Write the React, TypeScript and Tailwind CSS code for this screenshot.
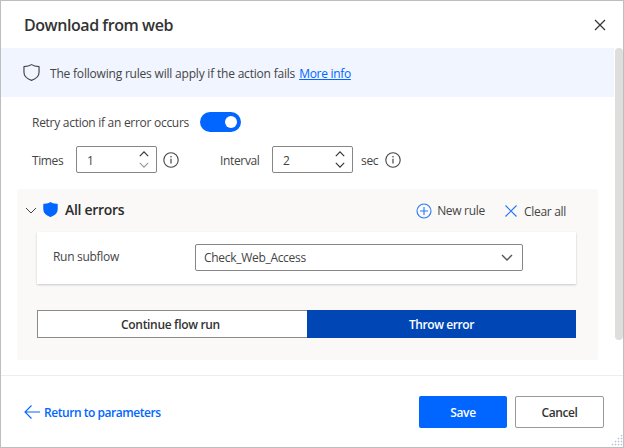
import type { ReactNode } from "react";

const Chevron = ({ up = false, thin = false, className = "" }: { up?: boolean; thin?: boolean; className?: string }) => (
  <svg viewBox="0 0 12 7" fill="none" stroke="currentColor" className={className}>
    <path d={up ? "M1 6 6 1l5 5" : "m1 1 5 5 5-5"} strokeWidth={thin ? "1" : "1.4"} />
  </svg>
);

const Info = () => (
  <svg viewBox="0 0 16 16" fill="none" stroke="#444" className="h-4 w-4 shrink-0">
    <circle cx="8" cy="8" r="7.2" strokeWidth="1.1" />
    <path d="M8 6.7v4.8" strokeWidth="1.2" />
    <circle cx="8" cy="4.7" r=".8" fill="#444" stroke="none" />
  </svg>
);

const Shield = ({ solid = false, className = "" }: { solid?: boolean; className?: string }) => (
  <svg
    viewBox="0 0 16 16"
    fill={solid ? "#0066ff" : "none"}
    stroke={solid ? "#0066ff" : "#444"}
    strokeWidth="1.1"
    strokeLinejoin="round"
    className={className}
  >
    <path d="M8 .6C6.200 1.800 3.500 2.400.9 2.500v5.300C.9 11.300 3.500 13.900 8 15.400c4.500-1.500 7.100-4.100 7.100-7.600V2.500C12.500 2.400 9.800 1.800 8 .6Z" />
  </svg>
);

const Stepper = ({ value, atMin = false }: { value: string; atMin?: boolean }) => (
  <div className="flex h-[27px] w-[81px] shrink-0 items-center justify-between rounded-[2px] border border-[#868686] bg-white pr-[7px] pl-[10px]">
    <span className="pt-0.5">{value}</span>
    <div className="flex flex-col gap-[5px]">
      <Chevron up className="h-[6px] w-[10px] text-[#333]" />
      <Chevron className={atMin ? "h-[6px] w-[10px] text-[#999]" : "h-[6px] w-[10px] text-[#333]"} />
    </div>
  </div>
);

const Label = ({ className = "", children }: { className?: string; children: ReactNode }) => (
  <span className={`whitespace-nowrap ${className}`}>{children}</span>
);

export default function App() {
  return (
    <div className="flex h-[448px] w-[624px] flex-col overflow-hidden border border-[#bebebe] bg-white font-['Open_Sans','Noto_Sans',sans-serif] text-[12px] leading-4 text-[#444]">
      <header className="flex h-[47px] shrink-0 items-center justify-between pr-[17px] pl-[23px]">
        <h1 className="text-[16px] leading-6 font-semibold tracking-[-0.44px] text-[#333]">Download from web</h1>
        <svg viewBox="0 0 12 12" stroke="#333" strokeWidth="1.2" className="h-3 w-3">
          <path d="m1 1 10 10M11 1 1 11" />
        </svg>
      </header>

      <div className="flex h-[327px] shrink-0">
        <main className="w-[613px]">
          <div className="flex h-[49px] items-center bg-[#f0f5ff] pl-[22px]">
            <Shield className="mr-[10px] h-[17px] w-[17px]" />
            <Label className="pt-0.5 tracking-[-0.2px]">The following rules will apply if the action fails</Label>
            <a className="ml-1 pt-0.5 tracking-[-0.3px] whitespace-nowrap text-[#0066ff] underline">More info</a>
          </div>

          <div className="flex h-[49px] items-center pl-[31px]">
            <Label className="w-[168px] pt-0.5 tracking-[-0.28px]">Retry action if an error occurs</Label>
            <div className="flex h-5 w-[41px] items-center justify-end rounded-full bg-[#0066ff] pr-1">
              <div className="h-3 w-3 rounded-full bg-white" />
            </div>
          </div>

          <div className="flex h-[27px] items-center pl-[31px]">
            <Label className="w-[44px] pt-0.5 tracking-[-0.4px]">Times</Label>
            <Stepper value="1" atMin />
            <div className="ml-[6px] flex w-[57px]">
              <Info />
            </div>
            <Label className="w-[52px] pt-0.5 tracking-[-0.35px]">Interval</Label>
            <Stepper value="2" />
            <Label className="ml-2 w-[24px] pt-0.5 tracking-[-0.3px]">sec</Label>
            <Info />
          </div>

          <section className="mt-4 ml-4 h-[171px] w-[581px] rounded-[3px] bg-[#faf9f8] pr-[22px] pl-5">
            <div className="flex h-[43px] items-center">
              <div className="-ml-[12px] flex flex-1 items-center">
                <Chevron thin className="h-[7px] w-[12px] text-[#444]" />
                <Shield solid className="mb-0.5 ml-[6px] h-[15px] w-[15px]" />
                <h2 className="ml-[7px] pb-px text-[14px] leading-5 font-semibold tracking-[-0.3px] text-[#2b2b2b]">All errors</h2>
              </div>
              <button className="flex items-center pr-5">
                <svg viewBox="0 0 16 16" fill="none" stroke="#2878f5" strokeWidth="1.1" className="mr-[5px] h-4 w-4">
                  <circle cx="8" cy="8" r="7" />
                  <path d="M8 4v8M4 8h8" />
                </svg>
                <Label className="pt-px tracking-[-0.3px]">New rule</Label>
              </button>
              <button className="mr-[10px] flex items-center">
                <svg viewBox="0 0 12 12" stroke="#2878f5" strokeWidth="1.2" className="mr-[7px] h-3 w-3">
                  <path d="m.5.5 11 11m0-11-11 11" />
                </svg>
                <Label className="pt-0.5 tracking-[-0.3px]">Clear all</Label>
              </button>
            </div>

            <div className="flex h-[52px] items-center bg-white pb-0.5 pl-4 shadow-[0_1px_2px_rgba(0,0,0,0.2)]">
              <Label className="w-[142px] shrink-0 tracking-[-0.3px]">Run subflow</Label>
              <div className="flex h-[27px] w-[328px] items-center justify-between rounded-[2px] border border-[#868686] pr-[9px] pl-2">
                <Label className="pt-px tracking-[-0.3px]">Check_Web_Access</Label>
                <Chevron className="h-[7px] w-[12px] text-[#555]" />
              </div>
            </div>

            <div className="mt-[26px] flex h-[28px] text-[12px] font-semibold">
              <button className="w-[270px] border border-r-0 border-[#8a8a88] bg-white pt-0.5 pr-1 tracking-[-0.32px] text-[#333]">
                Continue flow run
              </button>
              <button className="w-[269px] bg-[#0046b5] pt-0.5 tracking-[-0.42px] text-white">Throw error</button>
            </div>
          </section>
        </main>
        <div className="ml-px h-[292px] w-2 rounded-full bg-[#dededc]" />
      </div>

      <footer className="relative flex flex-1 items-center border-t border-[#ededed] pr-[19px] pl-[23px] font-semibold">
        <a className="flex flex-1 items-center text-[#0066ff]">
          <svg viewBox="0 0 16 14" fill="none" stroke="currentColor" strokeWidth="1.1" className="mr-1 h-[14px] w-4">
            <path d="M16 7H1M7.500.500 1 7l6.500 6.500" />
          </svg>
          <Label className="pt-0.5 tracking-[-0.45px]">Return to parameters</Label>
        </a>
        <button className="mr-2 h-8 w-[88px] rounded-[2px] bg-[#0066ff] pt-0.5 tracking-[-0.35px] text-white">Save</button>
        <button className="h-8 w-[89px] rounded-[2px] border border-[#999] pt-0.5 tracking-[-0.4px] text-[#333]">Cancel</button>
        <svg viewBox="0 0 12 12" fill="#b8c2d6" className="absolute right-0 bottom-0 h-3 w-3">
          <path d="M10 0h1v1h-1zM7 3h1v1H7zM10 3h1v1h-1zM4 6h1v1H4zM7 6h1v1H7zM10 6h1v1h-1zM1 9h1v1H1zM4 9h1v1H4zM7 9h1v1H7zM10 9h1v1h-1z" stroke="#b8c2d6" strokeWidth=".6" />
        </svg>
      </footer>
    </div>
  );
}
